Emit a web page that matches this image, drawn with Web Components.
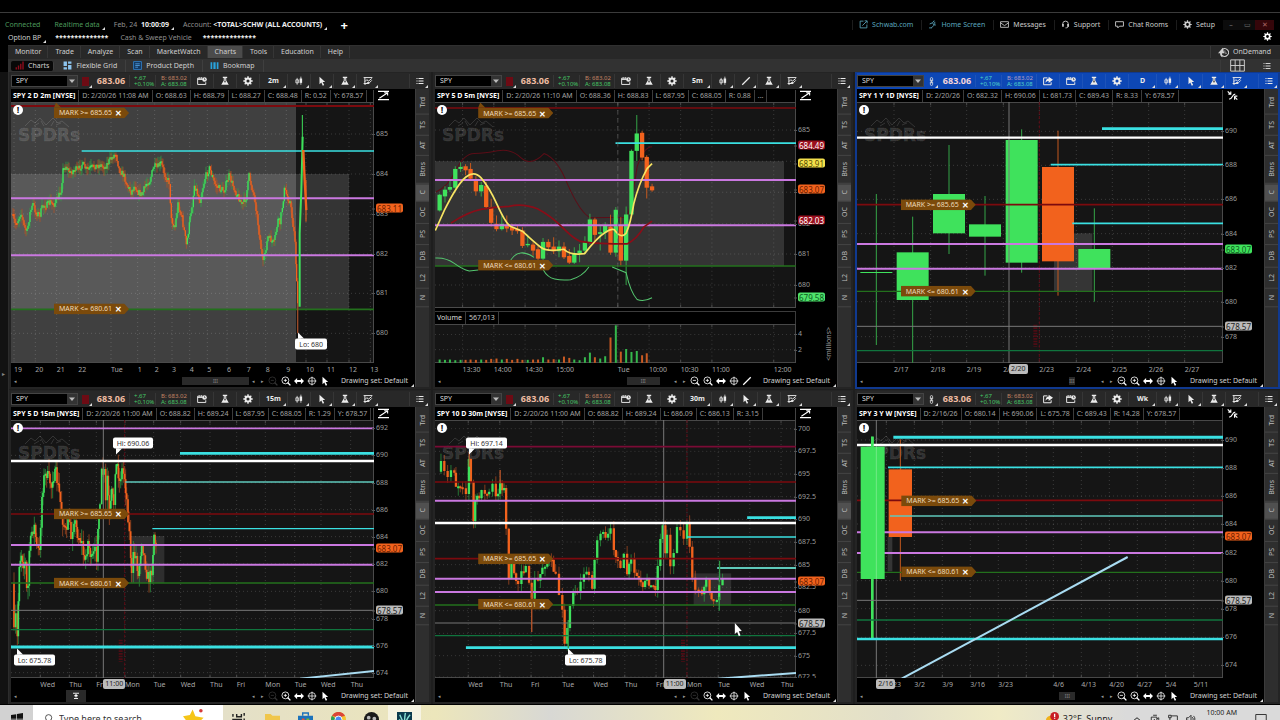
<!DOCTYPE html>
<html lang="en">
<head>
<meta charset="utf-8">
<title>Charts</title>
<style>
  html, body { margin: 0; height: 100%; background: #000; overflow: hidden; }
  body { font-family: "Noto Sans", "Open Sans", sans-serif; font-size: 7px; line-height: 10px; color: #c8c8c8; }
</style>
</head>
<body>
<trading-app>
  <account-bar slot="top"></account-bar>
  <main-menu slot="top"></main-menu>
  <chart-panel chart="m2"></chart-panel>
  <chart-panel chart="m5"></chart-panel>
  <chart-panel chart="d1" active></chart-panel>
  <chart-panel chart="m15"></chart-panel>
  <chart-panel chart="m30"></chart-panel>
  <chart-panel chart="w1"></chart-panel>
  <task-bar slot="bottom"></task-bar>
</trading-app>

<script>
// Icons, all on a 16 x 16 grid
const ICONS = {
  ext: '<path d="M8 2H2v12h12V8M6 10l8-8M10 1.500h4.500V6" fill="none" stroke="currentColor" stroke-width="1.500"/>',
  home: '<path d="M11 1l-3 4 3 4-5 5M8 5l-5 2M10 8l4 1M2 14h5M12 3v4" fill="none" stroke="currentColor" stroke-width="1.500"/>',
  mail: '<path d="M1 3h14v10H1zM1 5l7 5 7-5" fill="none" stroke="currentColor" stroke-width="1.500"/>',
  support: '<path d="M3 9V7a5 5 0 0 1 10 0v4c0 2-2 3-5 3" fill="none" stroke="currentColor" stroke-width="1.600"/><path d="M2 7h3v5H2zM11 7h3v5h-3z" fill="currentColor"/>',
  chat: '<path d="M1 3h14v8H8l-3 3v-3H1z" fill="none" stroke="currentColor" stroke-width="1.600"/>',
  gear: '<g stroke="currentColor" fill="none"><circle cx="8" cy="8" r="4" stroke-width="3"/><path d="M8 .5V4M8 12v3.500M.5 8H4M12 8h3.500M2.700 2.700l2.500 2.500M10.800 10.800l2.500 2.500M2.700 13.300l2.500-2.500M10.800 5.200l2.500-2.500" stroke-width="2.200"/></g>',
  calendar: '<path d="M9 3.500H1v10h13V10M1 5.500h8M3.500 2v2M7 2v2" fill="none" stroke="currentColor" stroke-width="1.500"/><circle cx="12" cy="5.500" r="3.700" fill="currentColor"/><path d="M12 3.500v2.300h1.600" stroke="#222" fill="none"/>',
  flask: '<path d="M4.500 1h7v2H10v4l4 7H2l4-7V3H4.500z" fill="currentColor"/><path d="M7.500 3.500v4L6.300 10h3.400L8.500 7.500v-4z" fill="#333"/>',
  candles: '<path d="M5 3v11M11 1v13" stroke="currentColor" stroke-width="1.200"/><path d="M3 6h4v5H3z" fill="none" stroke="currentColor" stroke-width="1.300"/><path d="M9 4h4v7H9z" fill="currentColor"/>',
  cursor: '<path d="M4 1l9 8.500H9l2.500 5-2.300 1-2.300-5L4 13z" fill="currentColor"/>',
  line: '<path d="M2 14L14 2" stroke="currentColor" stroke-width="2"/>',
  study: '<path d="M1 2.500h14M3 2.500V14M1 12h9M3 9l3-3 3 2 5-4M4 13l4-3 2 1 4-4" fill="none" stroke="currentColor" stroke-width="1.500"/>',
  menu: '<path d="M5 3h10M5 8h10M5 13h10M1 3h2M1 8h2M1 13h2" stroke="currentColor" stroke-width="2"/>',
  share: '<path d="M7 3H1v11h12v-4" fill="none" stroke="currentColor" stroke-width="1.600"/><path d="M9 1l7 5-7 5V8C7 8 5 9 4 11c0-4 2-7 5-7z" fill="currentColor"/>',
  grid: '<path d="M.7 2h14.600v12H.7zM.7 8h14.600M5.500 2v12M10.500 2v12" fill="none" stroke="currentColor"/>',
  zoomIn: '<path d="M10.500 10.500L15 15" stroke="currentColor" stroke-width="2.200"/><circle cx="7" cy="7" r="5.500" fill="none" stroke="currentColor" stroke-width="1.300"/><path d="M4.500 7h5M7 4.500v5" stroke="currentColor" stroke-width="1.300"/>',
  zoomOut: '<path d="M10.500 10.500L15 15" stroke="currentColor" stroke-width="2.200"/><circle cx="7" cy="7" r="5.500" fill="none" stroke="currentColor" stroke-width="1.300"/><path d="M4.500 7h5" stroke="currentColor" stroke-width="1.300"/>',
  arrows: '<path d="M0 8l5-5v3.500h6V3l5 5-5 5V9.500H5V13z" fill="currentColor"/>',
  target: '<circle cx="8" cy="8" r="5.500" fill="none" stroke="currentColor" stroke-width="1.200"/><path d="M8 1v14M1 8h14" stroke="currentColor" stroke-width="1.200"/>',
  demand: '<path d="M6 4a5.500 5.500 0 1 1 0 8" fill="none" stroke="currentColor" stroke-width="1.500"/><path d="M7 1L0 9h3c0 3 1 5 4 6-1-3-1-4-1-6h3z" fill="currentColor"/><path d="M10 5v4h3" fill="none" stroke="currentColor"/>',
  scale: '<path d="M0 2h16M0 14h16M2 12L14 4M9 4h5v4" fill="none" stroke="currentColor" stroke-width="1.600"/>',
  scale2: '<path d="M1 2l4 4M2 6h3.500V2M3 13c5 1 4-7 9-7M11 9v5M11 9h4M15 14l-4-4" fill="none" stroke="currentColor" stroke-width="1.700"/>',
  link: '<path d="M6 7V3a2 2 0 0 1 4 0v4zM6 9v4a2 2 0 0 0 4 0V9zM8 5v6" fill="none" stroke="currentColor" stroke-width="1.500"/>',
  bars: '<path d="M1 11h2.500v4H1zM5 8h2.500v7H5zM9 5h2.500v10H9zM13 1h2.500v14H13z" fill="#8d0d1c"/>',
  flex: '<path d="M1 1h6v8H1zM9 1h6v4H9zM1 11h6v4H1zM9 7h6v8H9z" fill="#8cc4ee"/>',
  depth: '<path d="M1 1h14v14H1z" fill="#14375e" stroke="#2f80c9" stroke-width="1.500"/><path d="M4 5h8M4 8h8M4 11h5" stroke="#5ab0f5" stroke-width="1.300"/>',
  book: '<path d="M1 2h3v12H1zM6 2h4v12H6zM12 2h3v12h-3z" fill="#29a3dc"/>',
  windows: '<path d="M0 2.500L7 1.500v6H0zM8 1.300L16 0v7.500H8zM0 8.500h7v6L0 13.500zM8 8.500h8V16l-8-1.300z" fill="#111"/>',
  search: '<circle cx="9" cy="6" r="5" fill="none" stroke="#333" stroke-width="1.300"/><path d="M5.500 10L1 15" stroke="#333" stroke-width="1.500"/>',
  star: '<path d="M7 1l2 5 6 1-4 4 1 5-5-2-6 2 2-6-3-4 5-1z" fill="#f5c518"/><circle cx="13" cy="2" r="1.300" fill="#d43a3a"/>',
  taskview: '<path d="M1 2v3M5 2v3h5V2M1 8h9v7H1zM13 1v3M13 7v8" fill="none" stroke="#222" stroke-width="1.500"/>',
  folder: '<path d="M0 2h6l2 2h8v12H0z" fill="#f0c64b"/><path d="M0 9h16v7H0z" fill="#f8dd7c"/>',
  store: '<path d="M0 4h16v12H0z" fill="#1d73bb"/><path d="M5 4V1h6v3" fill="none" stroke="#1d73bb" stroke-width="1.500"/><path d="M4 7h3v3H4z" fill="#ef5030"/><path d="M9 7h3v3H9z" fill="#7cba2e"/><path d="M4 11h3v3H4z" fill="#29a8e0"/><path d="M9 11h3v3H9z" fill="#fcb922"/>',
  chrome: '<circle cx="8" cy="8" r="8" fill="#f4c430"/><path d="M1 4a8 8 0 0 1 14 0L8 6z" fill="#db4437"/><path d="M1 4a8 8 0 0 0 6 12l2-6z" fill="#2f9d56"/><circle cx="8" cy="8" r="3.700" fill="#4a89f3" stroke="#fff"/>',
  obs: '<circle cx="8" cy="8" r="8" fill="#1a1a1a"/><circle cx="5" cy="6" r="2" fill="#b9b9b9"/><circle cx="11" cy="7" r="2" fill="#b9b9b9"/><circle cx="13" cy="12" r="3" fill="#d52b2b"/>',
  tos: '<path d="M0 0h16v16H0z" fill="#0b3a4e"/><path d="M8 14C6 9 4 6 3 3M8 14C8 9 8 5 9 1M8 14c2-5 3-8 6-11M5 10L2 8" fill="none" stroke="#8ae0d4" stroke-width="1.500"/>',
  sun: '<circle cx="7" cy="10" r="6" fill="#f0b21c"/><circle cx="11" cy="5" r="5" fill="#c81e24"/><path d="M11 2v4M11 7v1" stroke="#fff" stroke-width="1.500"/>',
  up: '<path d="M2 11l6-5 6 5" fill="none" stroke="#222" stroke-width="1.600"/>',
  cam: '<path d="M2 5h9v9H2zM5 2h6M11 8l3-2v7l-3-2M6 9h2" fill="none" stroke="#222" stroke-width="1.400"/>',
  net: '<path d="M1 2h4v4H1zM5 3h10v9H6M3 6v8M2 14h8" fill="none" stroke="#222" stroke-width="1.400"/>',
  sound: '<path d="M1 6h3l4-4v12l-4-4H1zM10 5c2 2 2 4 0 6M12 3c3 3 3 7 0 10" fill="none" stroke="#222" stroke-width="1.400"/>',
  note: '<path d="M1 2h14v11H9l-2 3v-3H1z" fill="none" stroke="#333" stroke-width="1.300"/>',
  pin: '<path d="M2 2.500h12M4 13h8M8 5v6M5 8l3-3 3 3z" fill="currentColor" stroke="currentColor" stroke-width="1.800"/>'
};

class UiIcon extends HTMLElement {
  connectedCallback() {
    if (!this.shadowRoot) this.attachShadow({ mode: "open" });
    this.shadowRoot.innerHTML = `
      <style>
        :host { display: inline-block; flex: none; width: var(--icon, 9px); height: var(--icon, 9px); }
        svg { display: block; width: 100%; height: 100%; }
      </style>
      <svg viewBox="0 0 16 16" aria-hidden="true">${ICONS[this.getAttribute("name")]}</svg>`;
  }
}

class TradingApp extends HTMLElement {
  connectedCallback() {
    this.attachShadow({ mode: "open" }).innerHTML = `
      <style>
        :host { display: flex; flex-direction: column; height: 100vh; background: #000; }
        .title { flex: none; height: 12px; border-bottom: 1px solid #3b3b3b; }
        .work { flex: 1; min-height: 0; display: flex; padding-bottom: 1px; }
        .gutter { width: 8px; border-right: 1px solid #2c2c2c; background: #121212; display: flex; align-items: flex-end; }
        .gutter button { all: unset; color: #888; font-size: 6px; padding: 0 0 325px 2px; }
        main { flex: 1; min-width: 0; display: grid; gap: 1px 2px; background: #1e1e1e;
          grid-template-columns: 422fr 420fr 425fr; grid-template-rows: 317fr 314fr; }
      </style>
      <div class="title"></div>
      <slot name="top"></slot>
      <div class="work">
        <div class="gutter"><button aria-label="Show left panel">▸</button></div>
        <main><slot></slot></main>
      </div>
      <slot name="bottom"></slot>`;
  }
}

class AccountBar extends HTMLElement {
  connectedCallback() {
    this.attachShadow({ mode: "open" }).innerHTML = `
      <style>
        :host { display: block; box-sizing: border-box; padding: 5px 0 0 5px; height: 32px; color: #8f8f8f; background: #000; }
        .row { display: flex; height: 13px; align-items: center; }
        .row > span { margin-right: 14px; white-space: nowrap; }
        .ok { color: #4c9a5c; }
        b { color: #eee; }
        .lite { color: #ccc; }
        .more { position: relative; }
        .more::after { content: ""; position: absolute; right: -5px; bottom: 0; border-style: solid; border-width: 0 0 3px 3px; border-color: transparent transparent #ddd; }
        nav { display: flex; margin-left: auto; align-items: center; }
        a { color: #ccc; text-decoration: none; display: flex; gap: 4px; align-items: center; padding: 0 8px 0 6px; border-left: 1px solid #1c1c1c; }
        a.blue { color: #5aa6bd; }
        button { all: unset; width: 16px; text-align: center; color: #777; background: #0c0c0c; }
        button.close { background: #35060a; color: #a66; width: 19px; margin-right: 6px; }
        .row .plus { background: none; color: #fff; font-size: 13px; font-weight: 700; }
        .gear { background: none; color: #fff; margin-left: auto; width: 26px; }
      </style>
      <div class="row">
        <span class="ok">Connected</span>
        <span class="ok more">Realtime data</span>
        <span class="more">Feb, 24 &nbsp;<b>10:00:09</b></span>
        <span class="more">Account: <b>&lt;TOTAL&gt;SCHW (ALL ACCOUNTS)</b></span>
        <button class="plus" aria-label="Add">+</button>
        <nav>
          <a class="blue" href="#schwab"><ui-icon name="ext"></ui-icon>Schwab.com</a>
          <a class="blue" href="#home"><ui-icon name="home"></ui-icon>Home Screen</a>
          <a href="#messages"><ui-icon name="mail"></ui-icon>Messages</a>
          <a href="#support"><ui-icon name="support"></ui-icon>Support</a>
          <a href="#chat"><ui-icon name="chat"></ui-icon>Chat Rooms</a>
          <a href="#setup"><ui-icon name="gear"></ui-icon>Setup</a>
          <button>–</button><button>▭</button><button class="close">✕</button>
        </nav>
      </div>
      <div class="row">
        <span class="lite more" style="margin-left:3px">Option BP</span>
        <b>**************</b>
        <span style="margin:0 11px 0 12px">Cash &amp; Sweep Vehicle</span>
        <b>**************</b>
        <button class="gear" aria-label="Settings"><ui-icon name="gear"></ui-icon></button>
      </div>`;
  }
}

class MainMenu extends HTMLElement {
  connectedCallback() {
    const items = ["Monitor", "Trade", "Analyze", "Scan", "MarketWatch", "Charts", "Tools", "Education", "Help"];
    this.attachShadow({ mode: "open" }).innerHTML = `
      <style>
        :host { display: block; margin-left: 8px; color: #d0d0d0; }
        nav { display: flex; align-items: center; background: #282828; height: 13px; border-top: 1px solid #303030; box-sizing: border-box; }
        nav.sub { background: #323232; border-color: #282828; height: 14px; }
        a { color: inherit; text-decoration: none; display: flex; align-items: center; gap: 4px; padding: 0 6px 0 7px; height: 12px; border-right: 1px solid #363636; box-sizing: border-box; }
        a.on { background: #4b4b4b; }
        .sub a { padding: 0 8px 0 7px; border-right-color: #3f3f3f; }
        .sub a.on { background: #080808; border-radius: 2px; height: 10px; margin: 0 2px 0 3px; padding: 0 4px; }
        .right { margin-left: auto; display: flex; border-left: 1px solid #3a3a3a; }
        .right a { border: 0; padding-right: 9px; }
        .sub .right a { padding: 0 9px; }
        .wide { --icon: 15px; }
      </style>
      <nav>${items.map(t => `<a href="#${t}"${t === "Charts" ? ' class="on"' : ""}>${t}</a>`).join("")}
        <div class="right"><a href="#ondemand"><ui-icon name="demand" style="--icon:11px"></ui-icon>OnDemand</a></div>
      </nav>
      <nav class="sub">
        <a class="on" href="#charts"><ui-icon name="bars"></ui-icon>Charts</a>
        <a href="#flexible"><ui-icon name="flex"></ui-icon>Flexible Grid</a>
        <a href="#depth"><ui-icon name="depth"></ui-icon>Product Depth</a>
        <a href="#bookmap"><ui-icon name="book"></ui-icon>Bookmap</a>
        <div class="right"><a href="#layout" class="wide" aria-label="Grid layout"><ui-icon name="grid"></ui-icon></a><a href="#options" aria-label="Options"><ui-icon name="menu" style="--icon:8px"></ui-icon></a></div>
      </nav>`;
  }
}

// Colours
const GREEN = "#3fe25c", ORANGE = "#f2621d", PURPLE = "#ca78e0", CYAN = "#3ae0e2", RED = "#7c0a0e", MOSS = "#23701c", PINE = "#10753e", WHITE = "#fff", GREY = "#777";

// One chart = a frame [x, y, width, height] in thirds of a pixel and everything drawn in it
const CHARTS = {
  m2: {
    title: "SPY 2 D 2m [NYSE]", span: "2m", tool: "cursor", zoomOff: true, thumb: [70, 100],
    info: ["D: 2/20/26 11:08 AM", "O: 688.63", "H: 688.79", "L: 688.27", "C: 688.48", "R: 0.52", "Y: 678.57"],
    frame: [33, 6, 1089, 783],
    prices: [[102, 685], [222, 684], [342, 683], [462, 682], [580, 681], [700, 680]],
    times: [[42, 19], [106, 20], [170, 21], [235, 22], [333, "Tue"], [413, 1], [464, 2], [516, 3], [569, 4], [622, 5], [681, 6], [740, 7], [797, 8], [859, 9], [918, 10], [981, 11], [1047, 12], [1111, 13]],
    zones: [[33, 6, 855, 783, "#404040"], [33, 222, 1014, 406, "#fff2"]],
    path: [[36, 342], [45, 372], [54, 360], [63, 336], [72, 378], [81, 396], [90, 339], [99, 312], [108, 339], [120, 342], [129, 315], [141, 315], [150, 306], [162, 312], [174, 294], [183, 270], [189, 210], [198, 198], [210, 219], [225, 207], [234, 210], [246, 192], [258, 207], [270, 204], [285, 198], [300, 195], [315, 201], [330, 180], [339, 168], [348, 159], [357, 207], [372, 228], [384, 261], [393, 276], [405, 255], [414, 276], [426, 285], [438, 252], [450, 240], [462, 198], [471, 204], [483, 189], [495, 225], [507, 246], [514, 360], [525, 380], [534, 312], [546, 354], [559, 435], [576, 315], [583, 255], [600, 300], [615, 234], [628, 205], [645, 252], [660, 267], [672, 270], [687, 228], [705, 270], [726, 312], [738, 294], [747, 228], [765, 300], [780, 420], [789, 489], [804, 411], [822, 429], [834, 360], [840, 370], [853, 270], [870, 306], [885, 420], [893, 620]],
    step: 3, noise: 20, bar: 4,
    extra: `<path d="M893 610V700" stroke="#9a4a28" stroke-width="4"/><path d="M899 620V400L904 270L908 110" fill="none" stroke="${GREEN}" stroke-width="6"/><path d="M907 150V45" stroke="${GREEN}" stroke-width="3"/><path d="M910 150L914 240L919 330" stroke="${ORANGE}" stroke-width="7" fill="none"/><path d="M918 240V365" stroke="${ORANGE}" stroke-width="3"/>`,
    levels: [[18, 33, 6, RED], [153, 245, 4, CYAN], [295, 33, 6, PURPLE], [466, 33, 6, PURPLE], [628, 33, 5, MOSS]],
    tags: [[162, 39, "MARK >= 685.65", true], [162, 627, "MARK <= 680.61"]],
    badges: [[324, "683.11", ORANGE, "#6b2000"]],
    notes: [[886, 733, "Lo: 680", "up"]]
  },
  m5: {
    title: "SPY 5 D 5m [NYSE]", span: "5m", tool: "line", thumb: [80, 95],
    info: ["D: 2/20/26 11:10 AM", "O: 688.36", "H: 688.83", "L: 687.95", "C: 688.05", "R: 0.88", "..."],
    frame: [12, 6, 1086, 615],
    prices: [[90, 685], [183, ""], [276, 683], [370, 682], [460, 681], [553, 680]],
    times: [[95, "13:30"], [189, "14:00"], [283, "14:30"], [376, "15:00"], [562, "Tue"], [656, "10:00"], [751, "10:30"], [845, "11:00"], [1031, "12:00"]],
    zones: [[12, 183, 1050, 313, "#343434"]],
    candles: [[26, 283, 330, 280, 333, 1], [42, 268, 288, 258, 306, 1], [57, 260, 268, 240, 275, 1], [73, 206, 262, 198, 265, 1], [89, 200, 206, 186, 215, 1], [104, 198, 210, 192, 225, 0], [119, 206, 235, 188, 240, 0], [135, 238, 273, 228, 286, 0], [151, 254, 273, 245, 288, 1], [166, 256, 320, 245, 325, 0], [181, 320, 367, 295, 378, 0], [197, 370, 386, 345, 392, 0], [213, 370, 386, 345, 390, 1], [228, 376, 384, 345, 395, 0], [244, 380, 390, 370, 403, 0], [260, 385, 392, 375, 400, 0], [275, 390, 436, 380, 442, 0], [291, 430, 434, 402, 440, 1], [307, 432, 450, 425, 465, 0], [322, 446, 474, 436, 478, 0], [337, 424, 474, 412, 478, 1], [353, 424, 440, 416, 450, 0], [369, 438, 452, 410, 460, 0], [385, 438, 452, 420, 470, 1], [400, 438, 470, 425, 475, 0], [416, 466, 486, 445, 490, 0], [431, 458, 486, 440, 490, 1], [447, 450, 458, 430, 485, 1], [463, 425, 450, 407, 460, 1], [478, 357, 427, 340, 432, 1], [493, 357, 403, 352, 425, 0], [509, 395, 400, 375, 450, 1], [524, 376, 396, 365, 415, 1], [540, 378, 456, 343, 462, 0], [556, 328, 456, 320, 468, 1], [571, 374, 480, 350, 495, 0], [587, 342, 480, 318, 553, 1], [603, 152, 342, 148, 350, 1], [619, 100, 152, 45, 182, 1], [635, 98, 172, 92, 180, 0], [649, 170, 262, 165, 294, 0], [665, 258, 270, 250, 274, 0]],
    body: 13,
    under: `<path d="M15 275Q50 260 75 210T130 160T200 152T270 172T340 160Q380 175 410 250Q450 340 480 352L590 350Q605 300 620 200Q640 140 665 140" fill="none" stroke="#5c0d17" stroke-width="3"/>`,
    extra: `<path d="M60 368Q110 335 150 327T235 318Q275 308 320 325Q360 345 400 385T460 424Q500 430 590 430Q620 415 640 380L665 362" fill="none" stroke="#8a0d18" stroke-width="5"/>
      <path d="M13 472Q45 470 70 488T115 511L142 508M240 478Q265 440 310 470M338 508Q350 530 372 535T420 537Q455 528 475 499M545 499L587 516Q600 575 620 596Q640 604 665 591" fill="none" stroke="#55c66f" stroke-width="3"/>
      <path d="M13 390L40 330Q80 250 105 230T150 232Q175 260 200 315T240 378L275 392Q310 425 330 440T400 446Q420 465 462 459Q500 410 525 395T555 392Q572 415 587 398Q600 370 610 310Q625 250 650 205L665 190" fill="none" stroke="#f7e463" stroke-width="5"/>
      <path d="M562 6V621" stroke="#666" stroke-width="2" stroke-dasharray="12 12"/>`,
    levels: [[24, 12, 5, RED], [129, 555, 5, CYAN], [239, 12, 6, PURPLE], [374, 12, 6, PURPLE], [496, 12, 5, MOSS]],
    tags: [[142, 39, "MARK >= 685.65", true], [142, 494, "MARK <= 680.61"]],
    badges: [[134, "684.49", "#9a0f1e", "#fff"], [188, "683.91", "#f3e04c", "#554a00"], [266, "683.07", ORANGE, "#6b2000"], [360, "682.03", "#9a0f1e", "#fff"], [588, "679.58", "#4fe26c", "#0c5a1c"]],
    volume: "567,013"
  },
  vol: {
    frame: [12, 670, 1086, 119], bare: true, unit: "<millions>",
    prices: [[702, 4], [748, 2]], times: [],
    bars: [10, 9, 10, 8, 9, 9, 10, 9, 10, 9, 12, 13, 10, 12, 9, 12, 9, 9, 10, 10, 17, 10, 11, 10, 19, 15, 10, 8, 17, 31, 17, 13, 20, 77, 114, 34, 42, 33, 36, 23, 29]
  },
  d1: {
    title: "SPY 1 Y 1D [NYSE]", span: "D", tool: "cursor", share: true, thumb: [87, 90],
    info: ["D: 2/20/26", "O: 682.32", "H: 690.06", "L: 681.73", "C: 689.43", "R: 8.33", "Y: 678.57"],
    frame: [21, 96, 1098, 783],
    prices: [[184, 690], [286, 688], [388, 686], [491, 684], [594, 682], [695, 680], [800, 678]],
    times: [[132, "2/17"], [242, "2/18"], [350, "2/19"], [460, "2/20"], [568, "2/23"], [679, "2/24"], [787, "2/25"], [896, "2/26"], [1004, "2/27"]],
    zones: [[612, 490, 115, 174, "#353535"]],
    candles: [[79, 606, 609, 372, 825, 1], [188, 547, 690, 440, 878, 1], [297, 372, 490, 225, 552, 1], [405, 463, 500, 378, 617, 1], [515, 210, 578, 178, 608, 1], [624, 291, 574, 182, 677, 0], [733, 537, 594, 415, 695, 1]],
    body: 96, cross: [477, 769], time: "2/20", dash: 568,
    levels: [[176, 756, 8, CYAN], [203, 21, 7, WHITE], [284, 602, 5, CYAN], [404, 21, 5, RED], [460, 667, 5, CYAN], [522, 21, 6, PURPLE], [596, 21, 6, PURPLE], [664, 21, 4, MOSS], [842, 21, 4, PINE]],
    tags: [[152, 404, "MARK >= 685.65"], [152, 664, "MARK <= 680.61"]],
    badges: [[536, "683.07", "#3fe25c", "#0c5a1c"], [768, "678.57", "#bbb", "#222"]]
  },
  m15: {
    title: "SPY 5 D 15m [NYSE]", span: "15m", tool: "cursor", zoomOff: true, pin: true, thumb: [18, 27],
    info: ["D: 2/20/26 11:00 AM", "O: 688.82", "H: 689.24", "L: 687.95", "C: 688.05", "R: 1.29", "Y: 678.57"],
    frame: [33, 90, 1089, 774],
    prices: [[114, 692], [196, 690], [278, 688], [359, 686], [440, 684], [522, 682], [604, 680], [686, 678], [768, 676], [848, 674]],
    times: [[121, "Wed"], [208, "Thu"], [289, "Fri"], [375, "Mon"], [461, "Tue"], [542, "Wed"], [630, "Thu"], [710, "Fri"], [796, "Mon"], [884, "Tue"], [963, "Wed"], [1052, "Thu"]],
    zones: [[392, 438, 101, 141, "#2e2e2e"]],
    path: [[38, 580], [42, 730], [47, 680], [52, 745], [58, 520], [64, 490], [70, 520], [76, 520], [80, 600], [84, 590], [88, 480], [96, 425], [103, 410], [110, 470], [119, 490], [122, 400], [126, 320], [132, 265], [140, 250], [150, 275], [154, 290], [158, 262], [168, 250], [178, 310], [188, 390], [200, 435], [204, 380], [213, 440], [222, 385], [232, 430], [245, 460], [254, 520], [264, 455], [274, 510], [285, 485], [290, 500], [294, 400], [300, 360], [305, 250], [312, 250], [317, 340], [322, 260], [328, 380], [335, 310], [341, 340], [346, 235], [352, 225], [358, 275], [366, 240], [374, 262], [380, 330], [388, 430], [395, 560], [400, 500], [408, 500], [415, 560], [425, 450], [432, 500], [440, 550], [447, 570], [455, 540], [462, 430], [468, 478]],
    step: 4, noise: 36, bar: 5, cross: [310, 661], time: "11:00", dash: 374,
    levels: [[115, 33, 5, PURPLE], [190, 540, 8, CYAN], [213, 33, 7, WHITE], [276, 376, 5, "#5fc9bb"], [372, 33, 5, RED], [416, 457, 4, CYAN], [465, 33, 6, PURPLE], [524, 33, 6, PURPLE], [579, 33, 5, MOSS], [719, 33, 4, PINE], [771, 33, 9, CYAN]],
    trend: "M900 866L1122 843",
    tags: [[162, 372, "MARK >= 685.65"], [162, 579, "MARK <= 680.61"]],
    badges: [[474, "683.07", ORANGE, "#6b2000"], [660, "678.57", "#bbb", "#222"]],
    notes: [[338, 160, "Hi: 690.06", "down"], [41, 809, "Lo: 675.78", "up"]]
  },
  m30: {
    title: "SPY 10 D 30m [NYSE]", span: "30m", tool: "cursor", zoomOff: true,
    info: ["D: 2/20/26 11:00 AM", "O: 688.82", "H: 689.24", "L: 686.09", "C: 686.13", "R: 3.15"],
    frame: [12, 90, 1086, 774],
    prices: [[116, 700], [184, "697.5"], [252, 695], [320, "692.5"], [388, 690], [456, "687.5"], [524, 685], [592, "682.5"], [662, 680], [730, "677.5"], [797, 675], [861, "672.5"]],
    times: [[112, "Wed"], [207, "Thu"], [301, "Fri"], [395, "Tue"], [489, "Wed"], [583, "Thu"], [677, "Fri"], [770, "Mon"], [864, "Tue"], [959, "Wed"], [1053, "Thu"]],
    zones: [[790, 550, 113, 95, "#2e2e2e"]],
    path: [[20, 245], [30, 225], [40, 250], [50, 265], [60, 240], [70, 240], [75, 285], [95, 285], [105, 310], [114, 210], [120, 280], [128, 395], [133, 330], [145, 325], [152, 290], [162, 315], [175, 310], [185, 285], [195, 325], [208, 280], [220, 300], [226, 420], [234, 555], [242, 530], [250, 560], [262, 580], [272, 535], [285, 540], [295, 590], [303, 620], [312, 570], [322, 575], [335, 530], [350, 510], [362, 520], [375, 560], [385, 610], [395, 650], [402, 750], [410, 720], [418, 650], [428, 600], [440, 600], [450, 580], [460, 550], [475, 555], [485, 585], [492, 510], [500, 450], [510, 425], [525, 450], [540, 425], [550, 470], [562, 510], [570, 545], [580, 500], [590, 550], [602, 510], [612, 550], [625, 570], [637, 600], [650, 560], [662, 590], [675, 590], [682, 530], [690, 440], [697, 410], [705, 490], [710, 430], [720, 520], [730, 490], [740, 400], [750, 425], [760, 440], [770, 405], [778, 480], [786, 560], [795, 600], [805, 590], [815, 615], [828, 560], [838, 600], [850, 635], [860, 620], [867, 575], [877, 575]],
    step: 8, noise: 24, bar: 7, cross: [700, 699], time: "11:00", dash: 770,
    extra: `<path d="M303 620V726M304 590V640M208 240V280M115 185V230" stroke="#b8552a" stroke-width="4"/><path d="M413 690V775M868 512V575M867 620V662" stroke="#2f9a48" stroke-width="4"/>`,
    levels: [[170, 12, 5, "#7a0b35"], [276, 12, 5, RED], [332, 12, 6, PURPLE], [383, 951, 8, CYAN], [399, 12, 7, WHITE], [441, 770, 5, CYAN], [506, 12, 5, RED], [534, 861, 6, "#5fc9bb"], [566, 12, 6, PURPLE], [606, 12, 6, PURPLE], [645, 12, 5, MOSS], [737, 12, 4, PINE], [773, 105, 8, CYAN]],
    trend: "M864 866L1100 849",
    tags: [[142, 506, "MARK >= 685.65"], [142, 643, "MARK <= 680.61"]],
    badges: [[574, "683.07", ORANGE, "#6b2000"], [698, "678.57", "#bbb", "#222"]],
    notes: [[106, 160, "Hi: 697.14", "down"], [403, 809, "Lo: 675.78", "up"]],
    pointer: `<path d="M914 699V732L921 726L926 739L931 736L926 724L935 723Z" fill="#fff"/>`
  },
  w1: {
    title: "SPY 3 Y W [NYSE]", span: "Wk", tool: "cursor", share: true, thumb: [83, 90],
    info: ["D: 2/16/26", "O: 680.14", "H: 690.06", "L: 675.78", "C: 689.43", "R: 14.28", "Y: 678.57"],
    frame: [21, 90, 1098, 774],
    prices: [[150, 690], [234, 688], [318, 686], [402, 684], [488, 682], [572, 680], [656, 678], [742, 676], [826, 674]],
    times: [[109, "2/23"], [193, "3/2"], [277, "3/9"], [361, "3/16"], [445, "3/23"], [529, ""], [610, "4/6"], [694, "4/13"], [778, "4/20"], [862, "4/27"], [947, "5/4"], [1031, "5/11"]],
    zones: [[113, 440, 14, 104, "#353535"]],
    under: `<path d="M67 140V748" stroke="${GREEN}" stroke-width="8"/>`,
    candles: [[151, 238, 441, 148, 572, 0]],
    body: 70, cross: [79, 631], time: "2/16",
    levels: [[142, 130, 9, CYAN], [165, 21, 7, WHITE], [232, 114, 5, CYAN], [331, 21, 5, RED], [378, 120, 5, "#5fc9bb"], [427, 21, 6, PURPLE], [489, 21, 6, PURPLE], [547, 21, 4, MOSS], [690, 21, 4, PINE], [747, 21, 8, CYAN]],
    front: `<rect x="32" y="170" width="72" height="397" fill="${GREEN}"/><path d="M67 140V172" stroke="${GREEN}" stroke-width="8"/><path d="M79 170V567" stroke="#fff4" stroke-width="3"/>`,
    trend: "M155 866L833 501",
    tags: [[154, 332, "MARK >= 685.65"], [154, 545, "MARK <= 680.61"]],
    badges: [[438, "683.07", ORANGE, "#6b2000"], [629, "678.57", "#bbb", "#222"]]
  }
};

// Same series on every load
function randomizer() {
  let seed = 7;
  return () => (seed = (seed * 16807) % 2147483647) / 2147483647;
}

function drawPath(c) {
  const random = randomizer();
  const wicks = { up: "", down: "" }, bodies = { up: "", down: "" };
  let last = c.path[0][1];
  for (let i = 1; i < c.path.length; i++) {
    const [x0, y0] = c.path[i - 1], [x1, y1] = c.path[i];
    const count = Math.max(1, Math.round((x1 - x0) / c.step));
    for (let k = 1; k <= count; k++) {
      const x = Math.round(x0 + (x1 - x0) * k / count);
      const y = Math.round(y0 + (y1 - y0) * k / count + (random() - .5) * c.noise);
      const dir = y < last ? "up" : "down";
      const top = Math.min(y, last), low = Math.max(y, last, top + 6);
      bodies[dir] += `M${x} ${top}V${low}`;
      wicks[dir] += `M${x} ${Math.round(top - random() * c.noise)}V${Math.round(low + random() * c.noise)}`;
      last = y;
    }
  }
  return `<path d="${wicks.up}" stroke="#2da645" stroke-width="2"/><path d="${wicks.down}" stroke="#bd5222" stroke-width="2"/>
    <path d="${bodies.down}" stroke="${ORANGE}" stroke-width="${c.bar}"/><path d="${bodies.up}" stroke="${GREEN}" stroke-width="${c.bar}"/>`;
}

function drawCandles(c) {
  return c.candles.map(([x, top, low, hi, lo, up]) => {
    const color = up ? GREEN : ORANGE, dim = up ? "#35a548" : "#c4591f";
    return `<path d="M${x} ${hi}V${lo}" stroke="${dim}" stroke-width="3"/><rect x="${x - c.body / 2}" y="${top}" width="${c.body}" height="${low - top}" fill="${color}"/>`;
  }).join("");
}

class PriceChart extends HTMLElement {
  connectedCallback() {
    const c = CHARTS[this.getAttribute("chart")];
    const [x0, y0, w, h] = c.frame;
    const left = x => `left:${((x - x0) / w * 100).toFixed(2)}%`;
    const top = y => `top:${((y - y0) / h * 100).toFixed(2)}%`;
    const times = c.bare ? CHARTS.m5.times : c.times;
    const grid = c.prices.map(([y]) => `M${x0} ${y}h${w}`).join("") + times.map(([x]) => `M${x} ${y0}v${h}`).join("");
    const ticks = times.map(([x]) => `M${x} ${y0}v10M${x} ${y0 + h}v-10`).join("");
    const esc = t => String(t).replace("<", "&lt;").replace(">", "&gt;");
    const bars = (c.bars || []).map((v, i) => {
      const candle = CHARTS.m5.candles[i];
      return `<rect x="${candle[0] - 3}" y="${788 - v}" width="6" height="${v}" fill="${candle[5] ? "#35b84c" : "#c95a22"}"/>`;
    }).join("");

    this.attachShadow({ mode: "open" }).innerHTML = `
      <style>
        :host { display: grid; grid-template-columns: minmax(0, 1fr) 41px; min-height: 0; color: #9a9a9a; }
        .plot { position: relative; background: #151515; box-shadow: inset -1px 0 #444, inset 0 1px #383838, inset 0 -1px #383838; }
        .axis { position: relative; clip-path: inset(0 -4px); }
        svg.draw { position: absolute; inset: 0; width: 100%; height: 100%; }
        .axis span, .tag, .note, .mark, .alert { position: absolute; white-space: nowrap; }
        .axis span { transform: translateY(-50%); left: 2px; }
        .axis span::before { content: ""; position: absolute; left: -4px; top: 5px; width: 3px; height: 1px; background: #555; }
        .axis .badge { border-radius: 2px; width: 27px; text-align: center; font-size: 8px; line-height: 9px; }
        .axis .unit { writing-mode: vertical-rl; transform: rotate(180deg); top: auto; bottom: 2px; left: 28px; }
        .axis .unit::before { display: none; }
        .mark { left: 7px; top: 24px; color: #fff2; font: 700 17px/18px "DejaVu Sans", sans-serif; -webkit-text-stroke: 1px #fff1; }
        .mark svg { position: absolute; left: 6px; top: -9px; width: 46px; height: 12px; }
        .alert { left: 2px; top: 3px; width: 10px; height: 10px; border-radius: 50%; background: #fff; color: #111; font-weight: 700; font-size: 9px; text-align: center; }
        .tag { transform: translateY(-50%); display: flex; align-items: center; box-sizing: border-box; height: 11px; padding: 0 7px 0 5px; gap: 3px; background: #7b4a0b; color: #ecd9b9; clip-path: polygon(0 0, calc(100% - 5px) 0, 100% 50%, calc(100% - 5px) 100%, 0 100%); }
        .peak { overflow: visible; clip-path: polygon(0 0, 2px -5px, 7px 0, calc(100% - 5px) 0, 100% 50%, calc(100% - 5px) 100%, 0 100%); }
        .peak::before { content: ""; position: absolute; left: 0; top: -5px; width: 7px; height: 5px; background: #7b4a0b; }
        .tag button { all: unset; color: #fff; font-weight: 700; font-size: 8px; }
        .note { transform: translateY(-50%); background: #fff; color: #333; border-radius: 2px; padding: 1px 4px; line-height: 9px; }
        .note::after { content: ""; position: absolute; left: 3px; border: 3px solid transparent; }
        .note.up::after { bottom: 100%; border-left-color: #fff; border-bottom-color: #fff; }
        .note.down::after { top: 100%; border-left-color: #fff; border-top-color: #fff; }
      </style>
      <div class="plot">
        <svg class="draw" viewBox="${c.frame.join(" ")}" preserveAspectRatio="none" aria-hidden="true">
          ${(c.zones || []).map(z => `<rect x="${z[0]}" y="${z[1]}" width="${z[2]}" height="${z[3]}" fill="${z[4]}"/>`).join("")}
          <path d="${grid}" stroke="#fff" stroke-opacity=".16" stroke-width="3" stroke-dasharray="3 9"/>
          <path d="${ticks}M${x0 + w - 1} ${y0}v${h}M${x0} ${y0 + 1}h${w}M${x0} ${y0 + h - 1}h${w}" stroke="#4c4c4c" stroke-width="3"/>
        </svg>
        ${c.bare ? "" : `<div class="mark">SPDRs<svg viewBox="0 0 46 12" fill="none" stroke="currentColor"><path d="M1 9l6-6 4 3 5-5 6 7 7-7 5 5 4-2 7 6M10 9l5-3M17 4l3 5M30 4l-3 5M32 8l5-2"/></svg></div>`}
        <svg class="draw" viewBox="${c.frame.join(" ")}" preserveAspectRatio="none" aria-hidden="true">
          ${c.dash ? `<path d="M${c.dash} ${y0}v${h}" stroke="#5c0a14" stroke-width="3" stroke-dasharray="9 5"/><path d="M${c.dash - 12} ${y0 + h - 115}v66" stroke="#4d0c14" stroke-width="12" stroke-dasharray="5 3"/>` : ""}
          ${c.under || ""}
          ${c.path ? drawPath(c) : ""}
          ${c.candles ? drawCandles(c) : ""}
          ${bars}
          ${c.cross ? `<path d="M${c.cross[0]} ${y0}v${h}M${x0} ${c.cross[1]}h${w}" stroke="${GREY}" stroke-width="3"/>` : ""}
          ${(c.levels || []).map(([y, x, width, color]) => `<path d="M${x} ${y}H${x0 + w}" stroke="${color}" stroke-width="${width}"/>`).join("")}
          ${c.extra || ""}
          ${c.front || ""}
          ${c.trend ? `<path d="${c.trend}" stroke="#a9dcf2" stroke-width="6"/>` : ""}
        </svg>
        ${c.bare ? "" : '<span class="alert">!</span>'}
        ${(c.tags || []).map(([x, y, t, peak]) => `<span class="tag${peak ? " peak" : ""}" style="${left(x)};${top(y)}">${esc(t)}<button aria-label="Remove alert">✕</button></span>`).join("")}
        ${(c.notes || []).map(([x, y, t, dir]) => `<span class="note ${dir}" style="${left(x)};${top(y)}">${t}</span>`).join("")}
        ${c.pointer ? `<svg class="draw" viewBox="${c.frame.join(" ")}" preserveAspectRatio="none" aria-hidden="true">${c.pointer}</svg>` : ""}
      </div>
      <div class="axis">
        ${c.prices.filter(p => p[1]).map(([y, t]) => `<span style="${top(y)}">${t}</span>`).join("")}
        ${(c.badges || []).map(([y, t, bg, fg]) => `<span class="badge" style="${top(y)};background:${bg};color:${fg}">${t}</span>`).join("")}
        ${c.unit ? `<span class="unit">${esc(c.unit)}</span>` : ""}
      </div>`;
  }
}

class SideTabs extends HTMLElement {
  connectedCallback() {
    const tabs = ["Trd", "TS", "AT", "Btns", "C", "OC", "PS", "DB", "L2", "N"];
    this.attachShadow({ mode: "open" }).innerHTML = `
      <style>
        :host { display: flex; flex-direction: column; background: #2e2e2e; width: 14px; padding-top: 2px; box-sizing: border-box; border-left: 1px solid #3c3c3c; }
        button { all: unset; writing-mode: vertical-rl; transform: rotate(180deg); padding: 6px 1px; border-top: 1px solid #454545; text-align: center; color: #bcbcbc; line-height: 11px; }
        .on { background: #505050; }
      </style>
      ${tabs.map(t => `<button${t === "C" ? ' class="on"' : ""}>${t}</button>`).join("")}`;
  }
}

class ChartPanel extends HTMLElement {
  connectedCallback() {
    const key = this.getAttribute("chart");
    const c = CHARTS[key];
    const [x0, , w] = c.frame;
    const left = x => `left:${((x - x0) / w * 100).toFixed(2)}%`;
    const tool = (name, more) => `<button class="tool${more ? " more" : ""}" aria-label="${name}"><ui-icon name="${name}"></ui-icon></button>`;
    this.attachShadow({ mode: "open" }).innerHTML = `
      <style>
        :host { display: flex; flex-direction: column; min-width: 0; min-height: 0; box-sizing: border-box; background: #000; border: solid #242424; border-width: 1px 2px 2px; --bar: #282828; }
        :host([active]) { border-color: #10398f; --bar: #0d47b5; }
        button { all: unset; box-sizing: border-box; }
        header { display: flex; flex: none; height: 16px; align-items: center; background: var(--bar); }
        .symbol { position: relative; width: 67px; height: 12px; flex: none; }
        select { appearance: none; width: 100%; height: 12px; box-sizing: border-box; border: 1px solid #444; background: #000; color: #ddd; font: inherit; padding: 0 4px; display: block; border-radius: 0; }
        .symbol::after { content: ""; position: absolute; right: 1px; top: 1px; width: 10px; height: 10px; background: #bbb; clip-path: polygon(20% 35%, 80% 35%, 50% 70%); }
        .symbol::before { content: ""; position: absolute; right: 1px; top: 1px; width: 10px; height: 10px; background: #333; }
        .link { position: relative; width: 15px; height: 14px; display: flex; align-items: center; justify-content: center; }
        .link i { width: 7px; height: 9px; background: #6d0b14; }
        .price { width: 36px; text-align: center; color: #f0bda2; font-size: 9px; font-weight: 700; }
        .chg, .quote { font-size: 6px; line-height: 6px; color: #46c766; }
        .chg { width: 26px; padding-left: 4px; box-sizing: border-box; border-left: 1px solid #fff1; }
        .quote { width: 35px; padding-left: 5px; box-sizing: border-box; border-left: 1px solid #fff1; }
        .quote em { font-style: normal; color: #c48464; }
        :host([active]) .price { color: #f6d5da; }
        :host([active]) .chg, :host([active]) .quote { color: #50d2c8; }
        :host([active]) .quote em { color: #b79fc4; }
        .tool { position: relative; width: 23px; height: 14px; display: flex; align-items: center; justify-content: center; color: #ececec; font-weight: 700; border-left: 1px solid #fff1; --icon: 10px; }
        .tool.span { width: 28px; }
        .more::after { content: ""; position: absolute; right: 1px; bottom: 0; border-style: solid; border-width: 0 0 3px 3px; border-color: transparent transparent #ddd; }
        .menu { margin-left: auto; width: 20px; --icon: 8px; }
        .body { flex: 1; display: flex; min-height: 0; }
        .main { flex: 1; min-width: 0; display: flex; flex-direction: column; }
        .info { display: flex; flex: none; height: 13px; align-items: center; color: #a0a0a0; }
        .cells { flex: 1; min-width: 0; display: flex; overflow: hidden; border-right: 1px solid #444; box-sizing: border-box; }
        .cells span { padding: 0 3px; border-right: 1px solid #3c3c3c; white-space: nowrap; line-height: 12px; }
        .cells .name { font-weight: 700; color: #fff; padding-left: 2px; }
        .info > ui-icon { margin: 0 26px 0 4px; --icon: 11px; color: #fff; }
        price-chart { flex: 205 1 0; }
        price-chart.vol { flex: 39 1 0; }
        .vhead { flex: none; display: flex; height: 13px; margin: 3px 41px 0 0; border: solid #3c3c3c; border-width: 1px 1px 0 0; line-height: 12px; box-sizing: border-box; }
        .vhead span { border-right: 1px solid #3c3c3c; padding: 0 3px; }
        .vhead .name { color: #ddd; padding-left: 2px; }
        .times { position: relative; height: 12px; margin-right: 41px; flex: none; color: #a8a8a8; }
        .times span { position: absolute; white-space: nowrap; top: 2px; }
        .times .at { background: #bbb; color: #222; border-radius: 2px; padding: 0 2px; top: 1px; }
        footer { display: flex; flex: none; height: 12px; align-items: center; color: #d0d0d0; }
        .track { position: relative; flex: 1; height: 8px; margin-left: 6px; }
        .thumb { position: absolute; top: 0; bottom: 0; background: #2a2a2a; color: #888; display: flex; align-items: center; justify-content: center; font-size: 5px; }
        .thumb.pin { top: -2px; bottom: -2px; color: #fff; --icon: 8px; }
        footer button { width: 13px; height: 12px; display: flex; align-items: center; justify-content: center; color: #fff; --icon: 10px; }
        footer .step { width: 9px; font-size: 5px; color: #999; }
        footer .off { color: #333; }
        footer .set { width: auto; position: relative; color: #d0d0d0; padding: 0 7px 0 9px; }
      </style>
      <header>
        <div class="symbol"><select aria-label="Symbol"><option>SPY</option></select></div>
        <button class="link more" aria-label="Link">${c.share ? '<ui-icon name="link" style="color:#ddd"></ui-icon>' : "<i></i>"}</button>
        <span class="price">683.06</span>
        <span class="chg">+.67<br>+0.10%</span>
        <span class="quote"><em>B: 683.02</em><br>A: 683.08</span>
        ${c.share ? tool("share") : ""}${tool("calendar")}${tool("flask")}${tool("gear")}
        <button class="tool span more">${c.span}</button>
        ${tool("candles", 1)}${tool(c.tool, 1)}${tool("flask", 1)}${tool("study", 1)}
        <button class="tool more menu" aria-label="Menu"><ui-icon name="menu"></ui-icon></button>
      </header>
      <div class="body">
        <div class="main">
          <div class="info">
            <div class="cells"><span class="name">${c.title}</span>${c.info.map(t => `<span>${t}</span>`).join("")}</div>
            <ui-icon name="${c.share ? "scale2" : "scale"}"></ui-icon>
          </div>
          <price-chart chart="${key}"></price-chart>
          ${c.volume ? `<div class="vhead"><span class="name">Volume</span><span>${c.volume}</span></div><price-chart class="vol" chart="vol"></price-chart>` : ""}
          <div class="times">${c.times.map(([x, t]) => `<span style="${left(x)}">${t}</span>`).join("")}${c.time ? `<span class="at" style="${left(c.cross[0])}">${c.time}</span>` : ""}</div>
          <footer>
            <button class="step" aria-label="Scroll left">◂</button>
            <div class="track">${c.thumb ? `<div class="thumb${c.pin ? " pin" : ""}" style="left:${c.thumb[0]}%;width:${c.thumb[1] - c.thumb[0]}%">${c.pin ? '<ui-icon name="pin"></ui-icon>' : "III"}</div>` : ""}</div>
            <button class="step" aria-label="Step back">◂</button><button class="step" aria-label="Step forward">▸</button>
            <button class="${c.zoomOff ? "off" : ""}" aria-label="Zoom out"><ui-icon name="zoomOut"></ui-icon></button>
            <button aria-label="Zoom in"><ui-icon name="zoomIn"></ui-icon></button>
            <button aria-label="Pan"><ui-icon name="arrows"></ui-icon></button>
            <button aria-label="Crosshair"><ui-icon name="target"></ui-icon></button>
            <button aria-label="Pointer"><ui-icon name="${c.tool}"></ui-icon></button>
            <button class="set more">Drawing set: Default</button>
          </footer>
        </div>
        <side-tabs></side-tabs>
      </div>`;
  }
}

class TaskBar extends HTMLElement {
  connectedCallback() {
    const apps = ["taskview", "folder", "store", "chrome", "obs", "tos"];
    this.attachShadow({ mode: "open" }).innerHTML = `
      <style>
        :host { display: flex; flex: none; height: 15px; overflow: hidden; align-items: flex-start; color: #222; --icon: 15px;
          background: linear-gradient(90deg, #dcdcda, #e6e1c4 22%, #ece6bb 34%, #d8d8d4 43%, #efe9bd 56%, #e2dfca 70%, #f0ebc6 78%, #dadada 88%); }
        button { all: unset; display: flex; align-items: center; justify-content: center; height: 28px; width: 33px; }
        .start { --icon: 12px; background: #d2d2d2; }
        label { display: flex; align-items: center; background: #fff; width: 190px; height: 28px; padding: 0 18px 0 10px; box-sizing: border-box; gap: 6px; --icon: 10px; }
        input { all: unset; flex: 1; min-width: 0; font-size: 9px; line-height: 12px; height: 12px; }
        input::placeholder { color: #333; opacity: 1; }
        .on { background: #f6f3e2; }
        .tray { margin-left: auto; display: flex; height: 28px; align-items: center; font-size: 9px; --icon: 10px; }
        .tray button { width: auto; padding: 0 4px; }
        time { font-size: 7px; padding: 0 14px 12px 6px; }
      </style>
      <button class="start" aria-label="Start"><ui-icon name="windows"></ui-icon></button>
      <label><ui-icon name="search"></ui-icon><input type="search" placeholder="Type here to search" aria-label="Search"><ui-icon name="star" style="--icon:22px"></ui-icon></label>
      ${apps.map(a => `<button class="${a === "tos" ? "on" : ""}" aria-label="${a}"><ui-icon name="${a}"></ui-icon></button>`).join("")}
      <div class="tray">
        <button style="gap:4px"><ui-icon name="sun" style="--icon:14px"></ui-icon>32°F&nbsp; Sunny</button>
        <button style="padding-left:16px" aria-label="Hidden icons"><ui-icon name="up"></ui-icon></button>
        <button aria-label="Camera"><ui-icon name="cam"></ui-icon></button>
        <button aria-label="Network"><ui-icon name="net"></ui-icon></button>
        <button aria-label="Volume"><ui-icon name="sound"></ui-icon></button>
        <time>10:00 AM</time>
        <button style="padding-right:13px" aria-label="Notifications"><ui-icon name="note" style="--icon:12px"></ui-icon></button>
      </div>`;
  }
}

customElements.define("ui-icon", UiIcon);
customElements.define("side-tabs", SideTabs);
customElements.define("price-chart", PriceChart);
customElements.define("chart-panel", ChartPanel);
customElements.define("account-bar", AccountBar);
customElements.define("main-menu", MainMenu);
customElements.define("task-bar", TaskBar);
customElements.define("trading-app", TradingApp);
</script>
</body>
</html>
